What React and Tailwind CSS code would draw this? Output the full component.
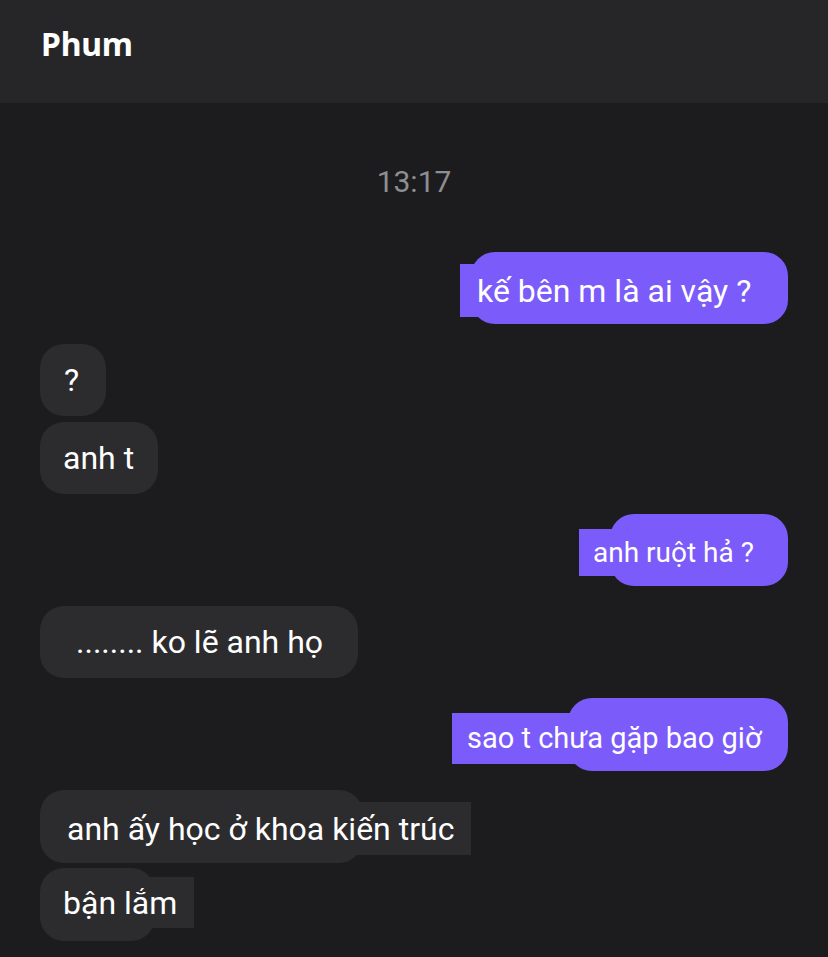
export default function App() {
  return (
    <div className="w-[828px] h-[957px] overflow-hidden bg-[#1c1c1e] text-white font-['Roboto',sans-serif]">
      <div className="h-[103px] bg-[#262628] px-[41px] pt-[23px]">
        <div className="text-[32px] font-bold leading-[42px] tracking-[-0.2px] font-['Noto_Sans',sans-serif]">Phum</div>
      </div>
      <div className="flex flex-col">
        <div className="mt-[64px] text-center text-[30px] leading-[30px] text-[#8e8e93]">13:17</div>

        {/* sent 1 */}
        <div className="mt-[55px] flex justify-end pr-[40px]">
          <div className="relative h-[72px] w-[317px] rounded-[24px] bg-[#7b5bf9]">
            <span className="absolute left-[-11px] top-[12px] flex h-[53px] items-center bg-[#7b5bf9] pl-[17px] pr-[10px] text-[32px] whitespace-nowrap">kế bên m là ai vậy ?</span>
          </div>
        </div>

        {/* received */}
        <div className="mt-[20px] flex pl-[40px]">
          <div className="flex h-[72px] w-[66px] items-center rounded-[24px] bg-[#2c2c2e] pl-[24px] text-[32px]">?</div>
        </div>
        <div className="mt-[6px] flex pl-[40px]">
          <div className="flex h-[72px] w-[118px] items-center rounded-[24px] bg-[#2c2c2e] pl-[23px] text-[32px] whitespace-nowrap">anh t</div>
        </div>

        {/* sent 2 */}
        <div className="mt-[20px] flex justify-end pr-[40px]">
          <div className="relative h-[72px] w-[178px] rounded-[24px] bg-[#7b5bf9]">
            <span className="absolute left-[-31px] top-[15px] flex h-[47px] items-center bg-[#7b5bf9] pl-[14px] pr-[10px] text-[28px] whitespace-nowrap">anh ruột hả ?</span>
          </div>
        </div>

        {/* received */}
        <div className="mt-[20px] flex pl-[40px]">
          <div className="flex h-[72px] w-[318px] items-center rounded-[24px] bg-[#2c2c2e] pl-[36px] text-[32px] whitespace-nowrap">........ ko lẽ anh họ</div>
        </div>

        {/* sent 3 */}
        <div className="mt-[20px] flex justify-end pr-[40px]">
          <div className="relative h-[73px] w-[220px] rounded-[24px] bg-[#7b5bf9]">
            <span className="absolute left-[-116px] top-[15px] flex h-[51px] items-center bg-[#7b5bf9] pl-[15px] pr-[10px] text-[29px] whitespace-nowrap">sao t chưa gặp bao giờ</span>
          </div>
        </div>

        {/* received overlays */}
        <div className="mt-[19px] flex pl-[40px]">
          <div className="relative h-[73px] w-[323px] rounded-[24px] bg-[#2c2c2e]">
            <span className="absolute left-[15px] top-[12px] flex h-[53px] items-center bg-[#2c2c2e] pl-[12px] pr-[17px] text-[32px] whitespace-nowrap">anh ấy học ở khoa kiến trúc</span>
          </div>
        </div>
        <div className="mt-[5px] flex pl-[40px]">
          <div className="relative h-[73px] w-[115px] rounded-[24px] bg-[#2c2c2e]">
            <span className="absolute left-[15px] top-[9px] flex h-[51px] items-center bg-[#2c2c2e] pl-[8px] pr-[17px] text-[32px] whitespace-nowrap">bận lắm</span>
          </div>
        </div>
      </div>
    </div>
  );
}
